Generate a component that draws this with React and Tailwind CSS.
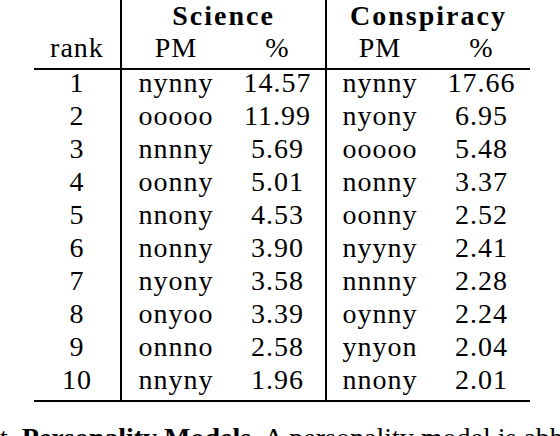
const science = [
  ["nynny", "14.57"],
  ["ooooo", "11.99"],
  ["nnnny", "5.69"],
  ["oonny", "5.01"],
  ["nnony", "4.53"],
  ["nonny", "3.90"],
  ["nyony", "3.58"],
  ["onyoo", "3.39"],
  ["onnno", "2.58"],
  ["nnyny", "1.96"],
];

const conspiracy = [
  ["nynny", "17.66"],
  ["nyony", "6.95"],
  ["ooooo", "5.48"],
  ["nonny", "3.37"],
  ["oonny", "2.52"],
  ["nyyny", "2.41"],
  ["nnnny", "2.28"],
  ["oynny", "2.24"],
  ["ynyon", "2.04"],
  ["nnony", "2.01"],
];

function Group({ title, rows, cols }) {
  return (
    <div className="flex flex-col border-l-2 border-black">
      {/* header */}
      <div className="pt-[3px] border-b-2 border-black">
        <div className="h-[32px] leading-[25px] text-center font-bold tracking-[2px]">
          {title}
        </div>
        <div className={`grid ${cols} h-[33px] leading-[25px] text-center`}>
          <div>PM</div>
          <div>%</div>
        </div>
      </div>

      {/* body */}
      <div className="border-b-2 border-black">
        {rows.map(([pm, pct], i) => (
          <div key={i} className={`grid ${cols} h-[33px] leading-[25px] text-center`}>
            <div>{pm}</div>
            <div>{pct}</div>
          </div>
        ))}
      </div>
    </div>
  );
}

export default function App() {
  return (
    <div className="w-[560px] h-[436px] overflow-hidden bg-white text-black text-[28px] tracking-[1px] [font-family:'Liberation_Serif',serif]">
      <div className="flex pl-[34px]">
        {/* rank column */}
        <div className="w-[86px] flex flex-col">
          <div className="pt-[3px] border-b-2 border-black">
            <div className="h-[32px]" />
            <div className="h-[33px] leading-[25px] text-center">rank</div>
          </div>
          <div className="border-b-2 border-black">
            {science.map((_, i) => (
              <div key={i} className="h-[33px] leading-[25px] text-center">
                {i + 1}
              </div>
            ))}
          </div>
        </div>

        <div className="w-[205px]">
          <Group title="Science" rows={science} cols="grid-cols-[108px_95px]" />
        </div>
        <div className="w-[205px]">
          <Group title="Conspiracy" rows={conspiracy} cols="grid-cols-[106px_97px]" />
        </div>
      </div>

      {/* caption, cut off by the frame */}
      <p className="mt-[22px] leading-[28px] whitespace-nowrap tracking-normal">
        t<span className="ml-[14px] font-bold">Personality Models.</span> A personality model is abbreviated
      </p>
    </div>
  );
}
